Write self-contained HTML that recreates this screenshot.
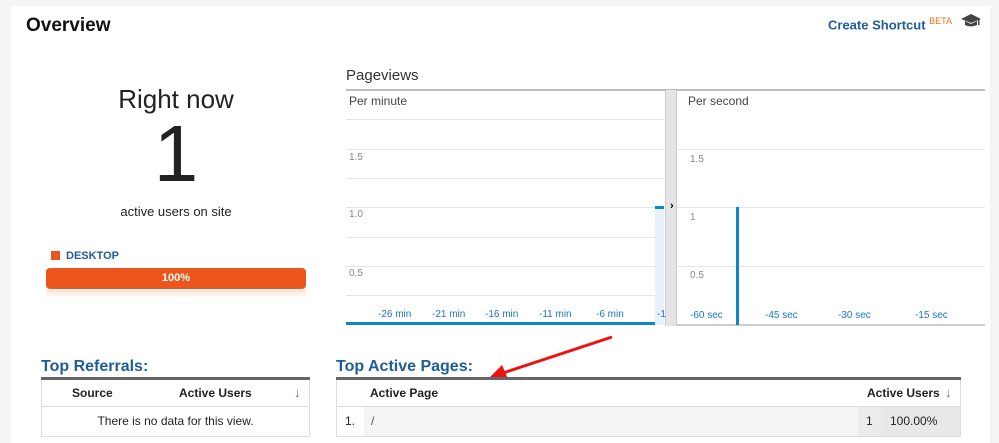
<!DOCTYPE html>
<html><head><style>
body{margin:0;width:999px;height:443px;background:#f5f5f5;font-family:"Liberation Sans",sans-serif;position:relative;overflow:hidden}
.a{position:absolute}
.panel{left:11px;top:6px;width:979px;height:437px;background:#fff}
.g{position:absolute;height:1px;background:#e6e6e6}
.yl{position:absolute;font-size:10px;color:#888}
.xl{position:absolute;font-size:10px;color:#1a73c9}
.th{font-size:12px;font-weight:bold;color:#222}
</style></head><body>
<div class="a panel"></div>
<div class="a" style="left:26px;top:15px;font-size:19px;font-weight:bold;color:#111">Overview</div>
<div class="a" style="left:828px;top:16px;font-size:13px;font-weight:bold;color:#1f5c9a">Create Shortcut <sup style="font-size:9px;color:#e8701f;font-weight:normal">BETA</sup></div>
<svg class="a" style="left:960px;top:13px" width="22" height="16" viewBox="0 0 22 16"><path d="M11 1 L21 6 L11 10 L1 6Z" fill="#444"/><path d="M5 8 V12 Q11 15 17 12 V8 L11 11Z" fill="#444"/><rect x="18" y="6" width="1.5" height="6" fill="#444"/></svg>

<div class="a" style="left:46px;top:84px;width:260px;text-align:center;font-size:26px;color:#222">Right now</div>
<div class="a" style="left:46px;top:112px;width:260px;text-align:center;font-size:80px;line-height:84px;color:#222">1</div>
<div class="a" style="left:46px;top:204px;width:260px;text-align:center;font-size:13px;color:#222">active users on site</div>
<div class="a" style="left:51px;top:251px;width:9px;height:9px;background:#e8561e"></div>
<div class="a" style="left:66px;top:250px;font-size:11px;font-weight:bold;color:#1f5c9a">DESKTOP</div>
<div class="a" style="left:46px;top:268px;width:260px;height:21px;border-radius:4px;background:#ec561d;color:#fff;font-size:11px;font-weight:bold;text-align:center;line-height:20px">100%</div>
<div class="a" style="left:46px;top:290px;width:260px;height:8px;background:linear-gradient(#fde0d4,#fff)"></div>

<div class="a" style="left:346px;top:67px;font-size:15px;color:#333">Pageviews</div>
<div class="a" style="left:346px;top:89px;width:639px;height:2px;background:#bbb"></div>
<div class="a" style="left:349px;top:94px;font-size:12px;color:#444">Per minute</div>
<div class="a" style="left:688px;top:94px;font-size:12px;color:#444">Per second</div>
<div class="g" style="left:346px;top:119px;width:318px"></div><div class="g" style="left:346px;top:149px;width:318px"></div><div class="g" style="left:346px;top:178px;width:318px"></div><div class="g" style="left:346px;top:207px;width:318px"></div><div class="g" style="left:346px;top:237px;width:318px"></div><div class="g" style="left:346px;top:266px;width:318px"></div><div class="g" style="left:346px;top:295px;width:318px"></div>
<div class="g" style="left:677px;top:149px;width:308px"></div><div class="g" style="left:677px;top:207px;width:308px"></div><div class="g" style="left:677px;top:266px;width:308px"></div>
<div class="a" style="left:677px;top:324px;width:308px;height:2px;background:#ccc"></div>
<div class="yl" style="left:349px;top:152px">1.5</div><div class="yl" style="left:349px;top:209px">1.0</div><div class="yl" style="left:349px;top:268px">0.5</div>
<div class="yl" style="left:690px;top:154px">1.5</div><div class="yl" style="left:690px;top:212px">1</div><div class="yl" style="left:690px;top:270px">0.5</div>
<div class="a" style="left:665px;top:90px;width:12px;height:236px;background:#e4e4e4;border-left:1px solid #ccc;border-right:1px solid #ccc;box-sizing:border-box"></div>
<div class="a" style="left:670px;top:200px;font-size:11px;font-weight:bold">›</div>
<div class="a" style="left:655px;top:206px;width:9px;height:119px;background:#e6f1fa"></div>
<div class="a" style="left:655px;top:206px;width:9px;height:3px;background:#0a86c9"></div>
<div class="a" style="left:346px;top:322px;width:309px;height:3px;background:#0a86c9"></div>
<div class="a" style="left:736px;top:207px;width:3px;height:118px;background:#0a86c9"></div>
<div class="xl" style="left:378px;top:309px">-26 min</div><div class="xl" style="left:432px;top:309px">-21 min</div><div class="xl" style="left:485px;top:309px">-16 min</div><div class="xl" style="left:539px;top:309px">-11 min</div><div class="xl" style="left:596px;top:309px">-6 min</div><div class="xl" style="left:657px;top:309px">-1</div>
<div class="xl" style="left:690px;top:310px">-60 sec</div><div class="xl" style="left:765px;top:310px">-45 sec</div><div class="xl" style="left:838px;top:310px">-30 sec</div><div class="xl" style="left:915px;top:310px">-15 sec</div>

<svg class="a" style="left:480px;top:334px" width="135" height="50"><line x1="132" y1="3" x2="20" y2="40" stroke="#e11" stroke-width="3"/><path d="M8 45 L22 31 L28 45Z" fill="#e11"/></svg>

<div class="a" style="left:41px;top:358px;font-size:16px;font-weight:bold;color:#1f5c9a">Top Referrals:</div>
<div class="a" style="left:41px;top:377px;width:269px;height:3px;background:#666"></div>
<div class="a" style="left:41px;top:380px;width:267px;height:56px;border:1px solid #ddd;border-top:0"></div>
<div class="a" style="left:41px;top:406px;width:269px;height:1px;background:#ddd"></div>
<div class="a th" style="left:72px;top:386px">Source</div>
<div class="a th" style="left:179px;top:386px">Active Users</div>
<div class="a" style="left:294px;top:385px;font-size:13px;color:#666">↓</div>
<div class="a" style="left:41px;top:414px;width:269px;text-align:center;font-size:12px;color:#222">There is no data for this view.</div>

<div class="a" style="left:336px;top:358px;font-size:16px;font-weight:bold;color:#1f5c9a">Top Active Pages:</div>
<div class="a" style="left:336px;top:377px;width:625px;height:3px;background:#666"></div>
<div class="a" style="left:336px;top:380px;width:623px;height:56px;border:1px solid #ddd;border-top:0"></div>
<div class="a" style="left:336px;top:406px;width:625px;height:1px;background:#ddd"></div>
<div class="a" style="left:364px;top:407px;width:494px;height:29px;background:#f4f4f4"></div>
<div class="a" style="left:858px;top:407px;width:23px;height:29px;background:#ececec"></div>
<div class="a" style="left:881px;top:407px;width:79px;height:29px;background:#e8e8e8"></div>
<div class="a th" style="left:370px;top:386px">Active Page</div>
<div class="a th" style="left:867px;top:386px">Active Users</div>
<div class="a" style="left:945px;top:385px;font-size:13px;color:#666">↓</div>
<div class="a" style="left:345px;top:414px;font-size:12px;color:#222">1.</div>
<div class="a" style="left:371px;top:414px;font-size:12px;color:#555">/</div>
<div class="a" style="left:866px;top:414px;font-size:12px;color:#222">1</div>
<div class="a" style="left:890px;top:414px;font-size:12px;color:#222">100.00%</div>
</body></html>
